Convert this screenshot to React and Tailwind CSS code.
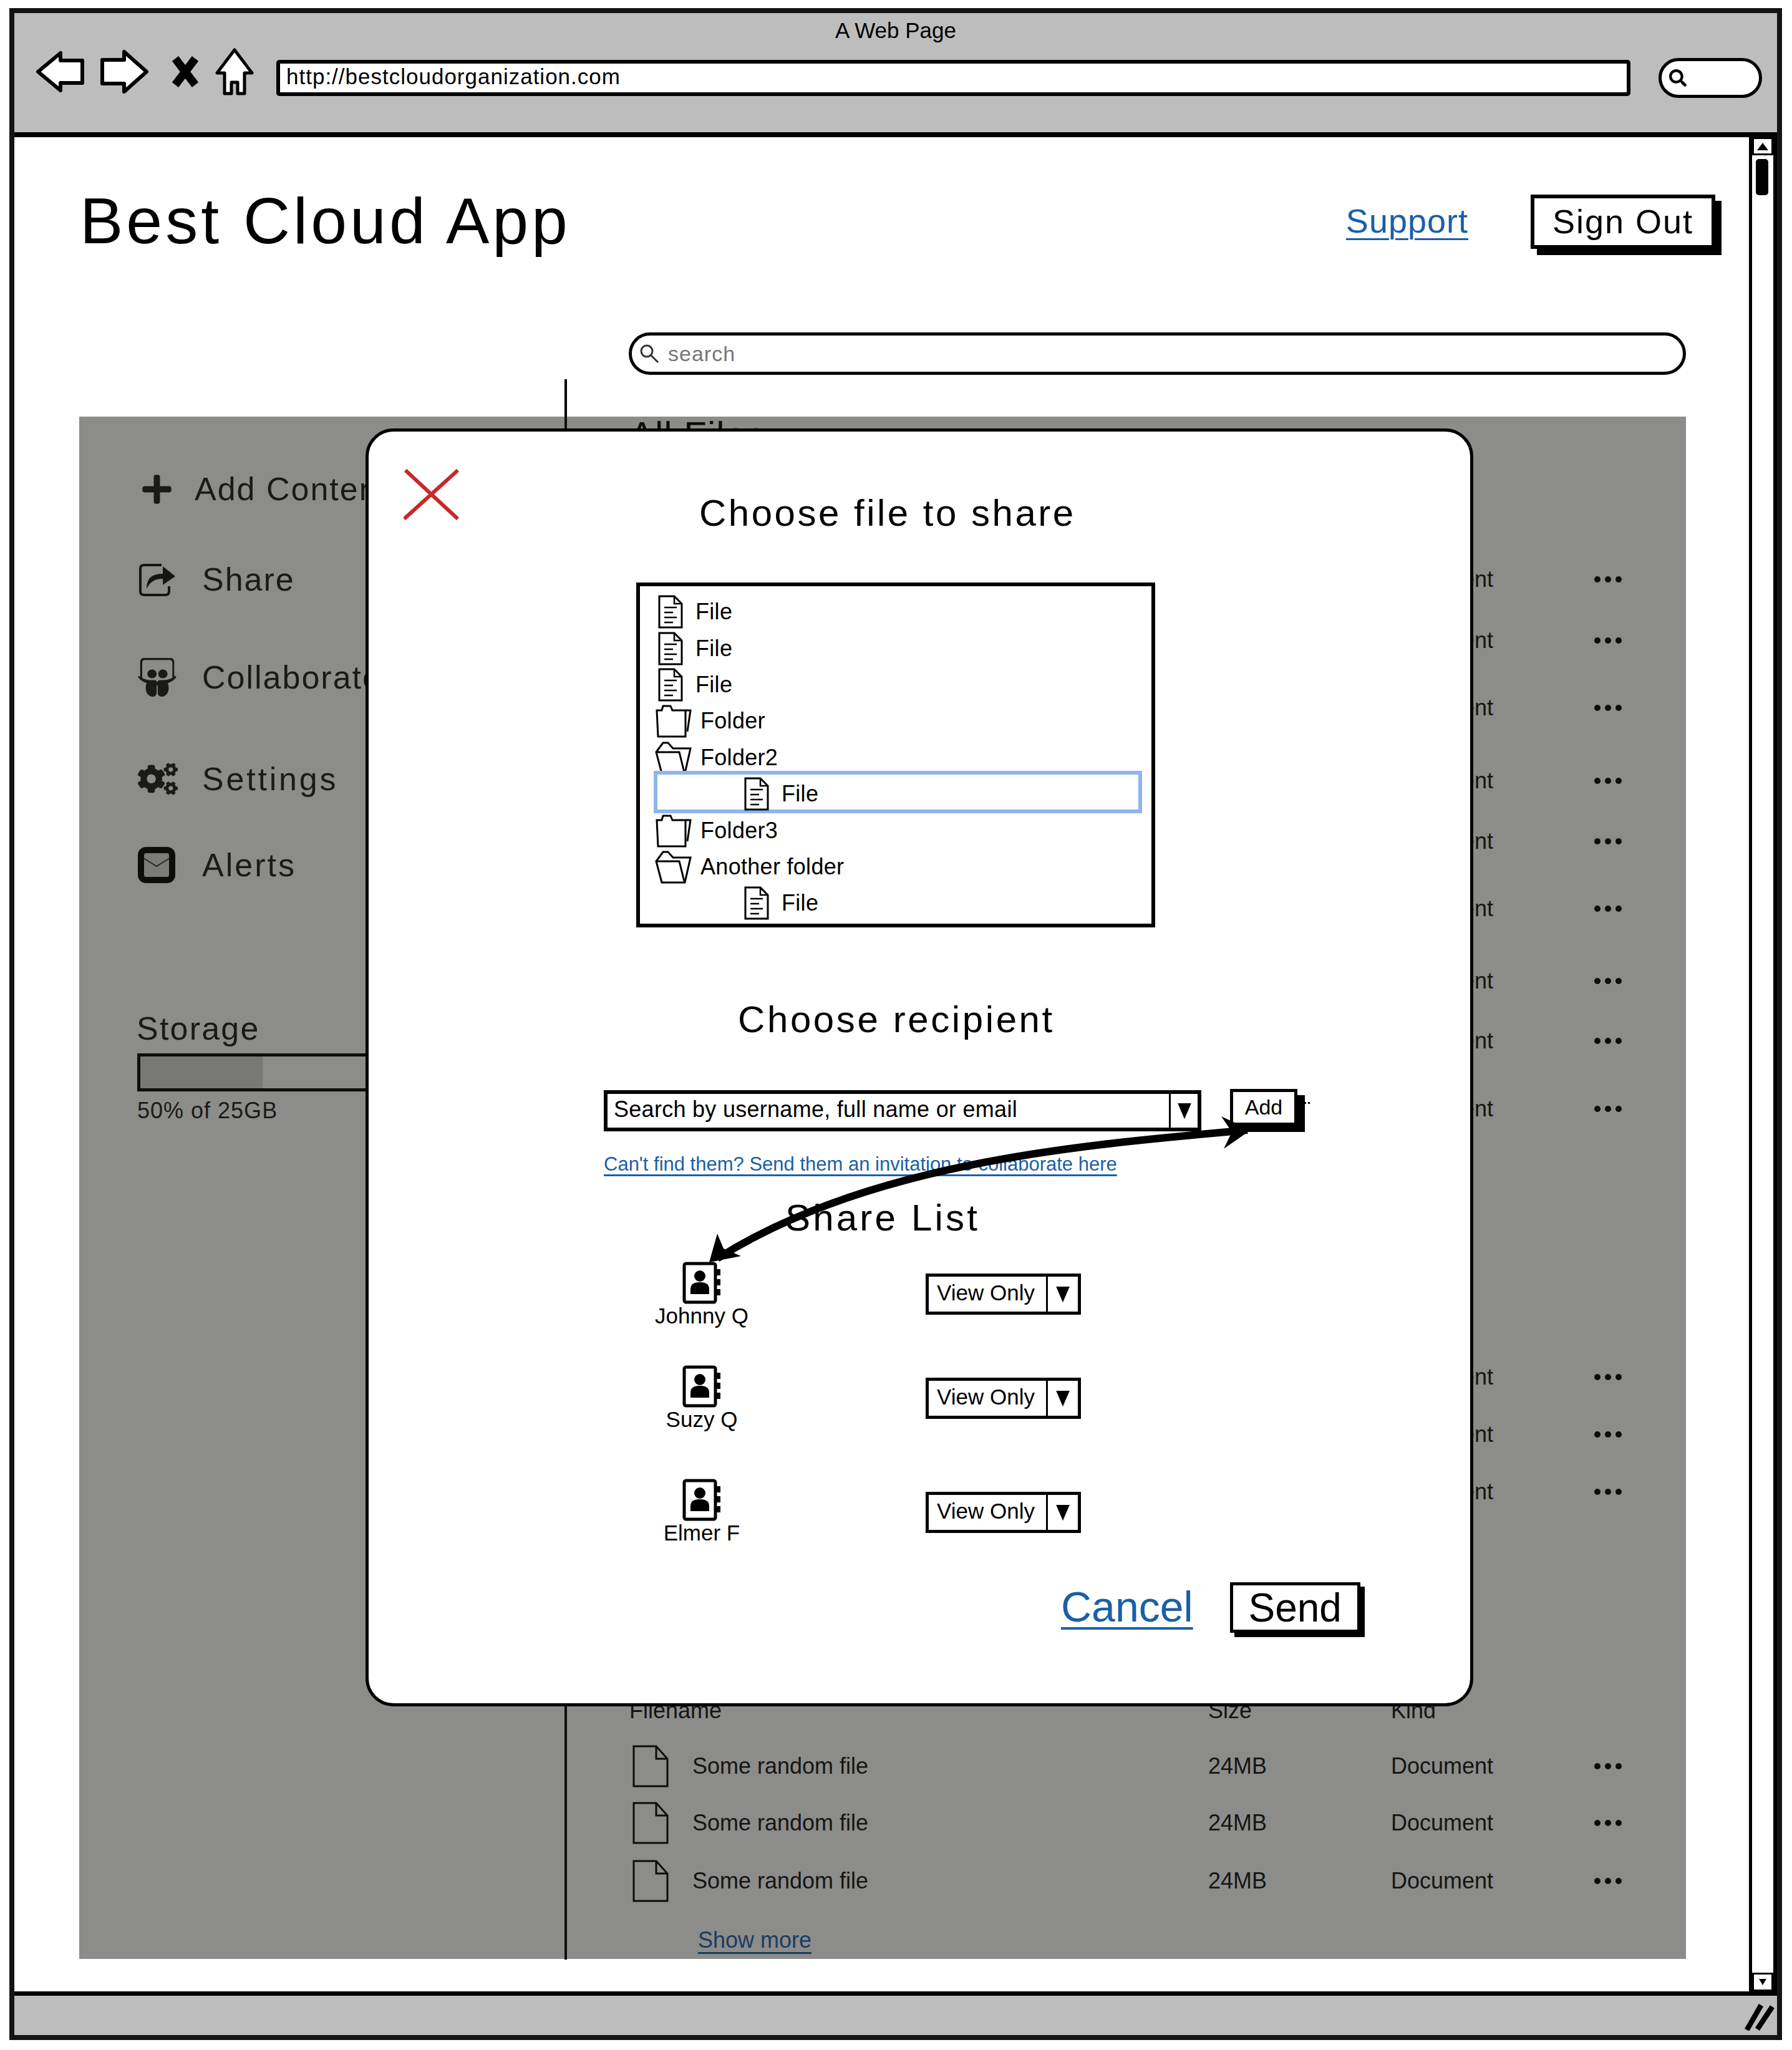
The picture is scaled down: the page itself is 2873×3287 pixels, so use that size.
import React from "react";
import { FaSlideshare, FaCogs, FaPlus, FaSearch } from "react-icons/fa";

const FileLines = ({ className }) => (
  <svg viewBox="0 0 40 54" className={className} fill="#fff" stroke="#000" strokeWidth="3">
    <path d="M2 2H26L38 14V52H2Z" />
    <path d="M26 2V14H38" fill="none" strokeWidth="2.5" />
    <path d="M10 20H30M10 28H24M10 36H30M10 44H24" fill="none" strokeWidth="2.5" />
  </svg>
);
const FolderClosed = ({ className }) => (
  <svg viewBox="0 0 60 54" className={className} fill="#fff" stroke="#000" strokeWidth="3">
    <path d="M4 10H12L14 3H26L29 10H50V52H6Z" />
    <path d="M50 10H58L53 44" fill="none" />
  </svg>
);
const FolderOpen = ({ className }) => (
  <svg viewBox="0 0 60 54" className={className} fill="#fff" stroke="#000" strokeWidth="3">
    <path d="M3 18L14 3H22L30 12H58L49 52H12Z" />
    <path d="M3 18H40L48 50" fill="none" />
  </svg>
);
const DocBlank = () => (
  <svg viewBox="0 0 58 68" className="w-[58px] h-[68px] shrink-0" fill="none" stroke="#000" strokeWidth="3">
    <path d="M2 2H38L56 22V66H2Z" />
    <path d="M38 2V22H56" />
  </svg>
);
const Contact = () => (
  <svg viewBox="0 0 62 68" className="w-[62px] h-[68px]">
    <rect x="3" y="3" width="50" height="62" rx="3" fill="#fff" stroke="#000" strokeWidth="5" />
    <path d="M55 12h6v10h-6zM55 28h6v10h-6zM55 44h6v10h-6z" fill="#000" />
    <circle cx="28" cy="23" r="9" fill="#000" />
    <path d="M13 52V44C13 35 20 33 28 33S43 35 43 44V52Z" fill="#000" />
  </svg>
);
const Caret = ({ className }) => (
  <svg viewBox="0 0 20 24" className={className}><path d="M1 2H19L10 23Z" fill="#000" /></svg>
);
const ViewOnly = ({ className }) => (
  <div className={`flex w-[249px] h-[66px] border-[5px] border-black bg-white ${className}`}>
    <span className="w-[188px] pl-[13px] text-[35px] leading-[52px] text-black">View Only</span>
    <span className="flex-1 border-l-[3px] border-black flex items-center justify-center">
      <Caret className="w-[24px] h-[30px]" />
    </span>
  </div>
);
const Person = ({ name, className }) => (
  <div className={`w-[150px] flex flex-col items-center ${className}`}>
    <Contact />
    <span className="mt-[1px] h-[36px] leading-[36px] text-[35px] text-black whitespace-nowrap">{name}</span>
  </div>
);

const TreeRow = ({ icon, label, indent, selected }) => (
  <div className={`relative flex items-center h-[58.4px] ${indent}`}>
    {selected && <div className="absolute left-[22px] right-[15px] top-[-8px] bottom-[-2px] border-[6px] border-[#8fb4ee]" />}
    {icon === "file" && <FileLines className="relative w-[40px] h-[54px] shrink-0 mr-[20px]" />}
    {icon === "closed" && <FolderClosed className="w-[60px] h-[54px] shrink-0 mr-[14px]" />}
    {icon === "open" && <FolderOpen className="w-[60px] h-[54px] shrink-0 mr-[14px]" />}
    <span className="relative text-[36px] leading-none tracking-[0.3px] text-black whitespace-nowrap">{label}</span>
  </div>
);

/* Rows with `covered` sit behind the dialog: only the end of their "Kind" cell and the dots show. */
const FileRow = ({ className, covered }) => (
  <div className={`flex items-center h-[72px] text-[36px] text-[#111] ${className}`}>
    <div className="w-[928px] flex items-center pl-[5px] shrink-0">
      {!covered && <DocBlank />}
      {!covered && <span className="ml-[38px]">Some random file</span>}
    </div>
    <span className="w-[293px] shrink-0">{covered ? "" : "24MB"}</span>
    <span className="w-[326px] shrink-0">Document</span>
    <span className="flex gap-[7px]">
      <i className="w-[10px] h-[10px] rounded-full bg-black" />
      <i className="w-[10px] h-[10px] rounded-full bg-black" />
      <i className="w-[10px] h-[10px] rounded-full bg-black" />
    </span>
  </div>
);

const Nav = ({ icon, label, className, iconBox = "w-[103px]" }) => (
  <div className={`flex items-center h-[80px] ml-[93px] text-[52px] text-[#1a1a1a] whitespace-nowrap ${className}`}>
    <span className={`shrink-0 flex items-center ${iconBox}`}>{icon}</span>
    {label}
  </div>
);

export default function App() {
  return (
    <div className="w-[2873px] h-[3287px] bg-white pt-[13px] pl-[15px] pr-[16px] pb-[16px] font-['Liberation_Sans',Arial,sans-serif] overflow-hidden">
      <div className="h-full flex flex-col border-[8px] border-[#141414]">
        {/* Browser chrome */}
        <div className="h-[199px] shrink-0 border-b-[8px] border-black bg-[#bdbdbd]">
          <div className="h-[49px] pt-[8px] flex items-center justify-center text-[35px] text-black">A Web Page</div>
          <div className="flex items-center pl-[34px] pt-[3px]">
            <svg viewBox="0 0 78 68" className="w-[78px] h-[68px]">
              <path d="M4 34L40 4V16H75V52H40V64Z" fill="#fff" stroke="#000" strokeWidth="6" strokeLinejoin="round" />
            </svg>
            <svg viewBox="0 0 78 72" className="w-[78px] h-[72px] ml-[26px]">
              <path d="M74 36L38 4V17H3V55H38V68Z" fill="#fff" stroke="#000" strokeWidth="6" strokeLinejoin="round" />
            </svg>
            <svg viewBox="0 0 46 52" className="w-[46px] h-[52px] ml-[35px]">
              <path d="M7 5L39 47M39 5L7 47" stroke="#000" strokeWidth="13" strokeLinecap="butt" />
            </svg>
            <svg viewBox="0 0 62 76" className="w-[62px] h-[76px] ml-[25px]">
              <path d="M31 3L59 40H47V73H36V55H26V73H15V40H3Z" fill="#fff" stroke="#000" strokeWidth="5" strokeLinejoin="round" />
            </svg>
            <div className="w-[2171px] h-[58px] mt-[20px] ml-[36px] border-[6px] border-black rounded-[5px] bg-white pl-[10px] text-[35px] tracking-[1px] leading-[42px] text-black">
              http://bestcloudorganization.com
            </div>
            <div className="w-[166px] h-[64px] mt-[20px] ml-[45px] rounded-[32px] border-[5px] border-black bg-white flex items-center pl-[12px]">
              <FaSearch className="w-[28px] h-[28px] text-black" />
            </div>
          </div>
        </div>

        {/* Page */}
        <div className="flex-1 flex min-h-0">
          <div className="relative flex-1 min-w-0 pl-[105px]">
            <div className="pt-[82px] flex items-center h-[186px] pr-[54px]">
              <h1 className="text-[104px] leading-[104px] tracking-[5px] text-black font-normal">Best Cloud App</h1>
              <a className="ml-auto text-[54px] tracking-[1px] text-[#1a5fa8] underline decoration-[3px] underline-offset-[9px]">Support</a>
              <div className="ml-[100px] mt-[3px] w-[296px] h-[87px] border-[6px] border-black bg-white flex items-center justify-center text-[54px] tracking-[2px] text-black shadow-[10px_10px_0_#000]">
                Sign Out
              </div>
            </div>
            <div className="mt-[127px] ml-[880px] w-[1695px] h-[68px] border-[5px] border-black rounded-[34px] bg-white flex items-center pl-[12px] text-[34px] tracking-[1px] text-[#777]">
              <svg viewBox="0 0 32 32" className="w-[32px] h-[32px] mr-[14px]" fill="none" stroke="#333" strokeWidth="3">
                <circle cx="12" cy="12" r="9" /><path d="M18 18L30 30" />
              </svg>
              search
            </div>

            <div className="mt-[7px] flex h-[2534px]">
              {/* Sidebar */}
              <div className="w-[777px] shrink-0 pt-[136px]">
                <Nav className="ml-[97px] tracking-[2px]" iconBox="w-[87px]" icon={<FaPlus className="w-[53px] h-[53px]" />} label="Add Content" />
                <Nav
                  className="mt-[65px] tracking-[2px]"
                  icon={
                    <svg viewBox="0 0 62 58" className="w-[62px] h-[58px]">
                      <path d="M38 6H10Q4 6 4 12V48Q4 54 10 54H44Q50 54 50 48V40" fill="none" stroke="#111" strokeWidth="4" />
                      <path d="M14 44C14 26 24 20 40 20V8L60 24L40 38V28C28 28 20 32 14 44Z" fill="#111" />
                    </svg>
                  }
                  label="Share"
                />
                <Nav className="mt-[77px] tracking-[2px]" icon={<FaSlideshare className="w-[62px] h-[62px]" />} label="Collaborate" />
                <Nav className="mt-[83px] tracking-[3.8px]" icon={<FaCogs className="w-[64px] h-[60px]" />} label="Settings" />
                <Nav
                  className="mt-[58px] tracking-[3px]"
                  icon={
                    <svg viewBox="0 0 60 58" className="w-[60px] h-[58px]">
                      <rect x="5" y="5" width="50" height="48" rx="8" fill="#ddd" stroke="#000" strokeWidth="10" />
                      <path d="M9 18L30 31L51 18" fill="none" stroke="#333" strokeWidth="2" />
                    </svg>
                  }
                  label="Alerts"
                />
                <div className="mt-[192px] ml-[91px] h-[60px] leading-[60px] text-[52px] tracking-[2.2px] text-[#1a1a1a]">Storage</div>
                <div className="mt-[10px] ml-[92px] w-[600px] h-[61px] border-[5px] border-black bg-white">
                  <div className="w-[196px] h-full bg-[#d6d6d6]" />
                </div>
                <div className="mt-[11px] ml-[92px] h-[40px] leading-[40px] text-[36px] tracking-[1px] text-[#1a1a1a]">50% of 25GB</div>
              </div>

              {/* Files */}
              <div className="flex-1 min-w-0 border-l-[4px] border-black pl-[100px] pt-[60px]">
                <h2 className="h-[60px] leading-[60px] text-[60px] tracking-[1px] text-black font-normal">All Files</h2>
                <FileRow covered className="mt-[165px]" />
                <FileRow covered className="mt-[26px]" />
                <FileRow covered className="mt-[36px]" />
                <FileRow covered className="mt-[45px]" />
                <FileRow covered className="mt-[25px]" />
                <FileRow covered className="mt-[36px]" />
                <FileRow covered className="mt-[44px]" />
                <FileRow covered className="mt-[24px]" />
                <FileRow covered className="mt-[37px]" />
                <FileRow covered className="mt-[358px]" />
                <FileRow covered className="mt-[20px]" />
                <FileRow covered className="mt-[20px]" />
                <div className="mt-[295px] h-[40px] leading-[40px] flex text-[36px] text-[#111]">
                  <span className="w-[928px]">Filename</span>
                  <span className="w-[293px]">Size</span>
                  <span>Kind</span>
                </div>
                <FileRow className="mt-[33px]" />
                <FileRow className="mt-[19px]" />
                <FileRow className="mt-[21px]" />
                <a className="mt-[37px] ml-[110px] block w-fit h-[44px] leading-[44px] text-[36px] text-[#1a5fa8] underline decoration-[3px] underline-offset-[7px]">Show more</a>
              </div>
            </div>

            {/* Dim layer */}
            <div className="absolute left-[104px] top-[448px] w-[2576px] h-[2473px] bg-[#1a1a16]/50" />

            {/* Modal */}
            <div className="absolute left-[563px] top-[467px] w-[1776px] h-[2049px] rounded-[45px] border-[5px] border-black bg-white text-black">
              <svg viewBox="0 0 90 84" className="absolute left-[56px] top-[59px] w-[90px] h-[84px]" fill="none" stroke="#c8282a" strokeWidth="6">
                <path d="M3 3L87 81M87 3L1 81" />
              </svg>
              <svg viewBox="591 692 1766 2039" className="absolute inset-0 w-[1766px] h-[2039px] z-10 pointer-events-none">
                <path d="M2000 1812C1750 1835 1400 1860 1150 2018" fill="none" stroke="#000" strokeWidth="12" />
                <path d="M1958 1790L2005 1812L1962 1842L1975 1815Z" fill="#000" />
                <path d="M1137 2024L1150 1978L1160 2002L1188 2014Z" fill="#000" />
                <path d="M2091 1767h3v3h-3zM2097 1767h3v3h-3z" fill="#000" />
              </svg>

              <h2 className="mt-[101px] ml-[530px] h-[60px] leading-[60px] text-[60px] tracking-[3.5px] font-normal whitespace-nowrap">Choose file to share</h2>

              <div className="mt-[81px] ml-[429px] w-[832px] h-[553px] border-[6px] border-black pt-[12px]">
                <TreeRow icon="file" label="File" indent="pl-[29px]" />
                <TreeRow icon="file" label="File" indent="pl-[29px]" />
                <TreeRow icon="file" label="File" indent="pl-[29px]" />
                <TreeRow icon="closed" label="Folder" indent="pl-[23px]" />
                <TreeRow icon="open" label="Folder2" indent="pl-[23px]" />
                <TreeRow icon="file" label="File" indent="pl-[167px]" selected />
                <TreeRow icon="closed" label="Folder3" indent="pl-[23px]" />
                <TreeRow icon="open" label="Another folder" indent="pl-[23px]" />
                <TreeRow icon="file" label="File" indent="pl-[167px]" />
              </div>

              <h2 className="mt-[118px] ml-[592px] h-[60px] leading-[60px] text-[60px] tracking-[3.6px] font-normal whitespace-nowrap">Choose recipient</h2>

              <div className="mt-[81px] ml-[377px] flex items-start">
                <div className="mt-[2px] w-[958px] h-[66px] border-[6px] border-black flex">
                  <span className="flex-1 pl-[10px] text-[36px] tracking-[0.28px] leading-[50px] whitespace-nowrap">Search by username, full name or email</span>
                  <span className="w-[46px] border-l-[3px] border-black flex items-center justify-center">
                    <Caret className="w-[24px] h-[30px]" />
                  </span>
                </div>
                <div className="ml-[46px] w-[108px] h-[59px] border-[5px] border-black flex items-center justify-center text-[34px] shadow-[12px_10px_0_#000]">Add</div>
              </div>

              <a className="mt-[35px] ml-[377px] block w-fit h-[36px] leading-[36px] text-[31px] whitespace-nowrap text-[#1a5fa8] underline decoration-[3px] underline-offset-[6px]">
                Can't find them? Send them an invitation to collaborate here
              </a>

              <h2 className="mt-[38px] ml-[668px] h-[60px] leading-[60px] text-[60px] tracking-[4.2px] font-normal whitespace-nowrap">Share List</h2>

              <div className="mt-[40px] ml-[459px] flex items-start">
                <Person name="Johnny Q" />
                <ViewOnly className="ml-[284px] mt-[19px]" />
              </div>
              <div className="mt-[61px] ml-[459px] flex items-start">
                <Person name="Suzy Q" />
                <ViewOnly className="ml-[284px] mt-[20px]" />
              </div>
              <div className="mt-[77px] ml-[459px] flex items-start">
                <Person name="Elmer F" />
                <ViewOnly className="ml-[284px] mt-[21px]" />
              </div>

              <div className="mt-[61px] ml-[1110px] flex items-center">
                <a className="mb-[4px] text-[68px] leading-none text-[#1a5fa8] underline decoration-[4px] underline-offset-[9px]">Cancel</a>
                <div className="ml-[59px] w-[209px] h-[81px] border-[5px] border-black flex items-center justify-center text-[64px] shadow-[7px_7px_0_#000]">Send</div>
              </div>
            </div>
          </div>

          {/* Scrollbar */}
          <div className="w-[45px] shrink-0 border-l-[5px] border-r-[6px] border-black flex flex-col bg-white">
            <div className="h-[29px] border-[3px] border-black flex items-center justify-center">
              <svg viewBox="0 0 20 14" className="w-[20px] h-[14px]"><path d="M10 1L19 13H1Z" fill="#000" /></svg>
            </div>
            <div className="ml-[6px] mt-[6px] w-[20px] h-[58px] rounded-[5px] bg-black" />
            <div className="mt-auto h-[30px] border-[3px] border-black flex items-center justify-center">
              <svg viewBox="0 0 14 12" className="w-[14px] h-[12px]"><path d="M1 1H13L7 11Z" fill="#000" /></svg>
            </div>
          </div>
        </div>

        {/* Status bar */}
        <div className="h-[70px] shrink-0 border-t-[7px] border-black bg-[#bdbdbd] flex items-center justify-end pr-[4px]">
          <svg viewBox="0 0 40 40" className="w-[48px] h-[48px]" stroke="#000" strokeWidth="7" fill="none">
            <path d="M3 39L22 6M17 38L37 8" />
          </svg>
        </div>
      </div>
    </div>
  );
}
